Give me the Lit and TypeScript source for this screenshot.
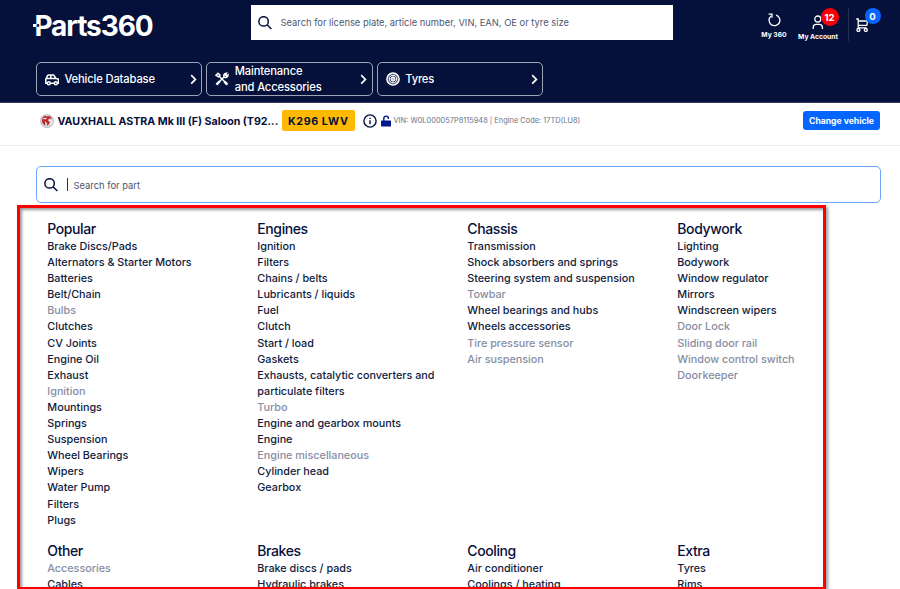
import { LitElement, html, css, svg } from "lit";
import { customElement, property } from "lit/decorators.js";
import { classMap } from "lit/directives/class-map.js";

interface Category {
  title: string;
  items: string[];
}

// Items that start with "~" have no parts for the chosen vehicle and are shown muted.
const categories: Category[] = [
  {
    title: "Popular",
    items: [
      "Brake Discs/Pads", "Alternators & Starter Motors", "Batteries", "Belt/Chain", "~Bulbs",
      "Clutches", "CV Joints", "Engine Oil", "Exhaust", "~Ignition", "Mountings", "Springs",
      "Suspension", "Wheel Bearings", "Wipers", "Water Pump", "Filters", "Plugs",
    ],
  },
  {
    title: "Engines",
    items: [
      "Ignition", "Filters", "Chains / belts", "Lubricants / liquids", "Fuel", "Clutch",
      "Start / load", "Gaskets", "Exhausts, catalytic converters and particulate filters",
      "~Turbo", "Engine and gearbox mounts", "Engine", "~Engine miscellaneous",
      "Cylinder head", "Gearbox",
    ],
  },
  {
    title: "Chassis",
    items: [
      "Transmission", "Shock absorbers and springs", "Steering system and suspension",
      "~Towbar", "Wheel bearings and hubs", "Wheels accessories", "~Tire pressure sensor",
      "~Air suspension",
    ],
  },
  {
    title: "Bodywork",
    items: [
      "Lighting", "Bodywork", "Window regulator", "Mirrors", "Windscreen wipers",
      "~Door Lock", "~Sliding door rail", "~Window control switch", "~Doorkeeper",
    ],
  },
  { title: "Other", items: ["~Accessories", "Cables"] },
  { title: "Brakes", items: ["Brake discs / pads", "Hydraulic brakes"] },
  { title: "Cooling", items: ["Air conditioner", "Coolings / heating"] },
  { title: "Extra", items: ["Tyres", "Rims"] },
];

const icons = {
  search: svg`<circle cx="5.6" cy="5.4" r="4.7"/><path d="M9 8.8 13.4 13"/>`,
  car: svg`<path d="M2.2 11.2H.8V7.2L2.6 3.6Q2.9 3 3.6 3H8.6L11 6.4 13.4 7.2V11.2H12.6M5.4 11.2H9.2M1.2 6.6H11M5.8 3V6.6"/><circle cx="3.8" cy="11.2" r="1.5"/><circle cx="10.8" cy="11.2" r="1.5"/>`,
  tools: svg`<path d="M.9 3.2 3 1.2 5 3 3.4 4.8ZM4.2 4.2 10 10"/><path d="M9.4 9.6 12.4 12.6" stroke-width="2.6"/><path d="M1.4 12.6 5 9" stroke-width="2.4"/><path d="M5 9 9.2 4.8M9 5Q8 1.8 11.4 1.2L10.4 3 11.2 3.8 13 2.8Q12.6 6.2 9.4 5.2"/>`,
  tyre: svg`<circle cx="7" cy="7" r="6.1" stroke-width="1.5"/><circle cx="7" cy="7" r="3.8" stroke-width="1"/><circle cx="7" cy="7" r="5" stroke-width=".9" stroke-dasharray="1 .5"/><circle cx="7" cy="7" r="1.9" stroke-width="1.1"/><path d="M7 3V11M3 7H11M4.2 4.2 9.8 9.8M9.8 4.2 4.2 9.8" stroke-width=".6"/>`,
  chevron: svg`<path d="M1.2 1.2 5.4 5.4 1.2 9.6"/>`,
  refresh: svg`<path d="M3.2 3A5.4 5.4 0 1 0 8 2.1"/><path d="M.6 1.2H4V4.8"/>`,
  user: svg`<circle cx="5.8" cy="4" r="3"/><path d="M1.2 14V12.4Q1.2 9.4 4.2 9.4H7.4Q10.4 9.4 10.4 12.4V14"/>`,
  cart: svg`<path d="M.2 1H2.2V9.8H10.6M2.2 3H11.6L10.8 7.4H2.2"/><circle cx="2.4" cy="12" r="1.5"/><circle cx="9.8" cy="12" r="1.5"/>`,
  info: svg`<circle cx="7" cy="7" r="6.1"/><path d="M7 6.2V10.2M7 3.7V5.1"/>`,
};

@customElement("line-icon")
class LineIcon extends LitElement {
  @property() name: keyof typeof icons = "search";
  @property({ type: Number }) w = 14;
  @property({ type: Number }) h = 14;
  @property({ type: Number }) stroke = 1.4;

  static styles = css`
    :host { display: block; flex: none; }
    svg { display: block; fill: none; stroke: currentColor; }
  `;

  render() {
    return html`<svg width=${this.w} height=${this.h} viewBox="0 0 ${this.w} ${this.h}" stroke-width=${this.stroke}>${icons[this.name]}</svg>`;
  }
}

@customElement("nav-button")
class NavButton extends LitElement {
  @property() icon = "car";
  @property() label = "";

  static styles = css`
    :host {
      display: flex; align-items: center; box-sizing: border-box;
      width: 166.4px; height: 34px; padding: 0 4.5px 0 8px;
      border: 1px solid #9fa4b8; border-radius: 5px; color: #fff;
    }
    .label {
      flex: 1; margin-left: 5.4px; white-space: pre-line;
      font: 500 11.2px/16px Inter, sans-serif; letter-spacing: -0.15px;
    }
  `;

  render() {
    return html`
      <line-icon name=${this.icon} w="14" h="14" stroke="1.5"></line-icon>
      <span class="label">${this.label}</span>
      <line-icon name="chevron" w="7" h="11" stroke="1.7"></line-icon>
    `;
  }
}

@customElement("part-category")
class PartCategory extends LitElement {
  @property({ attribute: false }) category!: Category;

  static styles = css`
    :host { display: block; color: #101b40; }
    .title {
      margin: 0; font: 500 14px/17px Inter, sans-serif; color: #06103a; letter-spacing: -0.4px;
      padding-bottom: 2px;
    }
    .list { margin: 0; padding: 0; list-style: none; font: 450 10.8px/16.09px Inter, sans-serif; letter-spacing: -0.02px; }
    .muted { color: #878ea3; }
  `;

  render() {
    return html`
      <h3 class="title">${this.category.title}</h3>
      <ul class="list">
        ${this.category.items.map((item) => {
          const muted = item.startsWith("~");
          return html`<li class=${classMap({ muted })}>${muted ? item.slice(1) : item}</li>`;
        })}
      </ul>
    `;
  }
}

@customElement("app-root")
class AppRoot extends LitElement {
  static styles = css`
    :host {
      display: block; position: relative; width: 900px; height: 589px; overflow: hidden;
      background: #fff; color: #06103a; font-family: Inter, sans-serif;
    }
    .header { height: 103px; box-sizing: border-box; background: #05113b; border-bottom: 1px solid #30395c; color: #fff; }
    .top { display: flex; align-items: flex-start; height: 62px; }
    .logo { position: relative; display: flex; flex: none; box-sizing: border-box; width: 251px; padding: 9px 0 0 33px; font: 700 28px/34px Inter, sans-serif; letter-spacing: -1.08px; }
    .mark { position: absolute; left: 33px; top: 21px; display: block; }
    .word { margin-left: 1.4px; }
    .search {
      display: flex; flex: none; align-items: center; box-sizing: border-box; width: 422px; height: 35px;
      margin-top: 5px; padding-left: 7px; background: #fff; color: #06103a;
    }
    .hint { margin-left: 8.5px; font-size: 9.36px; color: #4d566e; }
    .account { display: flex; flex: 1; }
    .action { position: relative; display: flex; flex-direction: column; align-items: center; font-size: 6.75px; line-height: 9px; font-weight: 700; white-space: nowrap; }
    .my360 { width: 26px; margin-left: 88px; padding-top: 13px; gap: 3px; }
    .user { width: 40px; margin-left: 11px; padding-top: 15px; gap: 2px; }
    .divider { width: 1px; height: 33px; margin: 8px 7px 0 10px; background: #252e52; }
    .cart { padding-top: 18px; }
    .badge {
      position: absolute; box-sizing: border-box; border-radius: 50%; text-align: center;
      color: #fff; font-weight: 700;
    }
    .red { left: 22.5px; top: 8px; width: 18px; height: 18px; background: #f90008; font-size: 9.5px; line-height: 19px; }
    .blue { left: 8.5px; top: 8px; width: 16px; height: 16px; background: #0565ff; font-size: 9.5px; line-height: 17px; }
    .nav { display: flex; gap: 4px; padding-left: 36px; }
    .vehicle { display: flex; align-items: flex-start; box-sizing: border-box; height: 43px; padding: 8px 20px 0 40px; border-bottom: 1px solid #ececef; }
    .group { display: flex; align-items: center; height: 20px; }
    .crest { display: block; flex: none; }
    .name { width: 221px; margin-left: 3.5px; font-size: 10.65px; font-weight: 700; white-space: nowrap; }
    .plate {
      width: 73.5px; height: 21px; margin: -1px 0 0 3px; border-radius: 2px; background: #ffb900;
      text-align: center; font-size: 10.7px; line-height: 23px; font-weight: 700; letter-spacing: 0.6px;
    }
    .info { margin-left: 7.5px; }
    .lock { display: block; margin-left: 4px; }
    .vin { margin: -1px 0 0 3px; font-size: 7.42px; color: #6b7286; white-space: nowrap; }
    .change {
      width: 77px; height: 19px; margin: 0 0 0 auto; border-radius: 3px; background: #0565ff; color: #fff;
      text-align: center; font-size: 8.6px; line-height: 20px; font-weight: 700;
    }
    .part-search {
      display: flex; align-items: center; box-sizing: border-box; width: 845px; height: 37px;
      margin: 20px 0 0 36px; padding-left: 7px; border: 1px solid #6aa4fb; border-radius: 5px;
    }
    .caret { width: 1px; height: 13px; margin: 0 5.5px 0 9px; background: #333; }
    .part-hint { padding-top: 1px; font-size: 9.4px; color: #4d566e; }
    .grid {
      display: grid; grid-template-columns: repeat(4, 210px); grid-auto-rows: 307px; row-gap: 14.7px;
      padding: 17px 0 0 47.3px;
    }
    .cell { padding-right: 20px; }
    .frame {
      position: absolute; left: 17px; top: 205px; width: 809px; height: 384px; box-sizing: border-box;
      border: 3px solid #fe0000; border-bottom-width: 2px;
      box-shadow: 2px 2px 3px rgba(0, 0, 0, 0.4), inset 2px 2px 3px rgba(0, 0, 0, 0.4);
    }
  `;

  render() {
    return html`
      <header class="header">
        <div class="top">
          <div class="logo">
            <span class="word">Parts360</span>
            <svg class="mark" width="9" height="9" viewBox="0 0 9 9">
              <path d="M0 3H4V6H0Z" fill="#fff"/>
              <path d="M3.6 3.2H6.2V5.8H3.6Z" fill="#05113b"/>
            </svg>
          </div>
          <div class="search">
            <line-icon name="search" w="14" h="14" stroke="1.5"></line-icon>
            <span class="hint">Search for license plate, article number, VIN, EAN, OE or tyre size</span>
          </div>
          <div class="account">
            <div class="action my360">
              <line-icon name="refresh" w="13" h="14" stroke="1.3"></line-icon>
              <span>My 360</span>
            </div>
            <div class="action user">
              <line-icon name="user" w="12" h="15" stroke="1.3"></line-icon>
              <span>My Account</span>
              <span class="badge red">12</span>
            </div>
            <div class="divider"></div>
            <div class="action cart">
              <line-icon name="cart" w="13" h="14" stroke="1.3"></line-icon>
              <span class="badge blue">0</span>
            </div>
          </div>
        </div>
        <nav class="nav">
          <nav-button icon="car" label="Vehicle Database"></nav-button>
          <nav-button icon="tools" label=${"Maintenance\nand Accessories"}></nav-button>
          <nav-button icon="tyre" label="Tyres"></nav-button>
        </nav>
      </header>

      <section class="vehicle">
        <div class="group">
          <svg class="crest" width="14" height="14" viewBox="0 0 14 14">
            <circle cx="7" cy="7" r="6.6" fill="#d6d8dd" stroke="#aeb2bb" stroke-width=".7"/>
            <path d="M2 7Q1.6 3 5 1.8L7 2.4Q10.6 1.2 12 5L9 4.6 8 6.4 10 8.6 7.4 12.2 7 9 4.8 7.2 5.4 11.6Q2.2 10.4 2 7Z" fill="#bd2a2c"/>
            <path d="M3 4.6 6.4 4.2 5 5.6M9.6 6.4 12 7.2 10 11" fill="none" stroke="#fff" stroke-width=".9"/>
          </svg>
          <span class="name">VAUXHALL ASTRA Mk III (F) Saloon (T92...</span>
          <span class="plate">K296 LWV</span>
          <line-icon class="info" name="info" w="14" h="14" stroke="1.4"></line-icon>
          <svg class="lock" width="10" height="12" viewBox="0 0 10 12">
            <path d="M2.8 6V3.4A2.3 2.3 0 0 1 7.4 3.4V4" fill="none" stroke="#001889" stroke-width="1.4"/>
            <rect x="0" y="5.6" width="10" height="5.8" rx=".7" fill="#001889"/>
          </svg>
          <span class="vin">VIN: W0L000057P8115948 | Engine Code: 17TD(LU8)</span>
        </div>
        <div class="change">Change vehicle</div>
      </section>

      <div class="part-search">
        <line-icon name="search" w="14" h="14" stroke="1.5"></line-icon>
        <div class="caret"></div>
        <span class="part-hint">Search for part</span>
      </div>

      <main class="grid">
        ${categories.map((c) => html`<part-category class="cell" .category=${c}></part-category>`)}
      </main>
      <div class="frame"></div>
    `;
  }
}
